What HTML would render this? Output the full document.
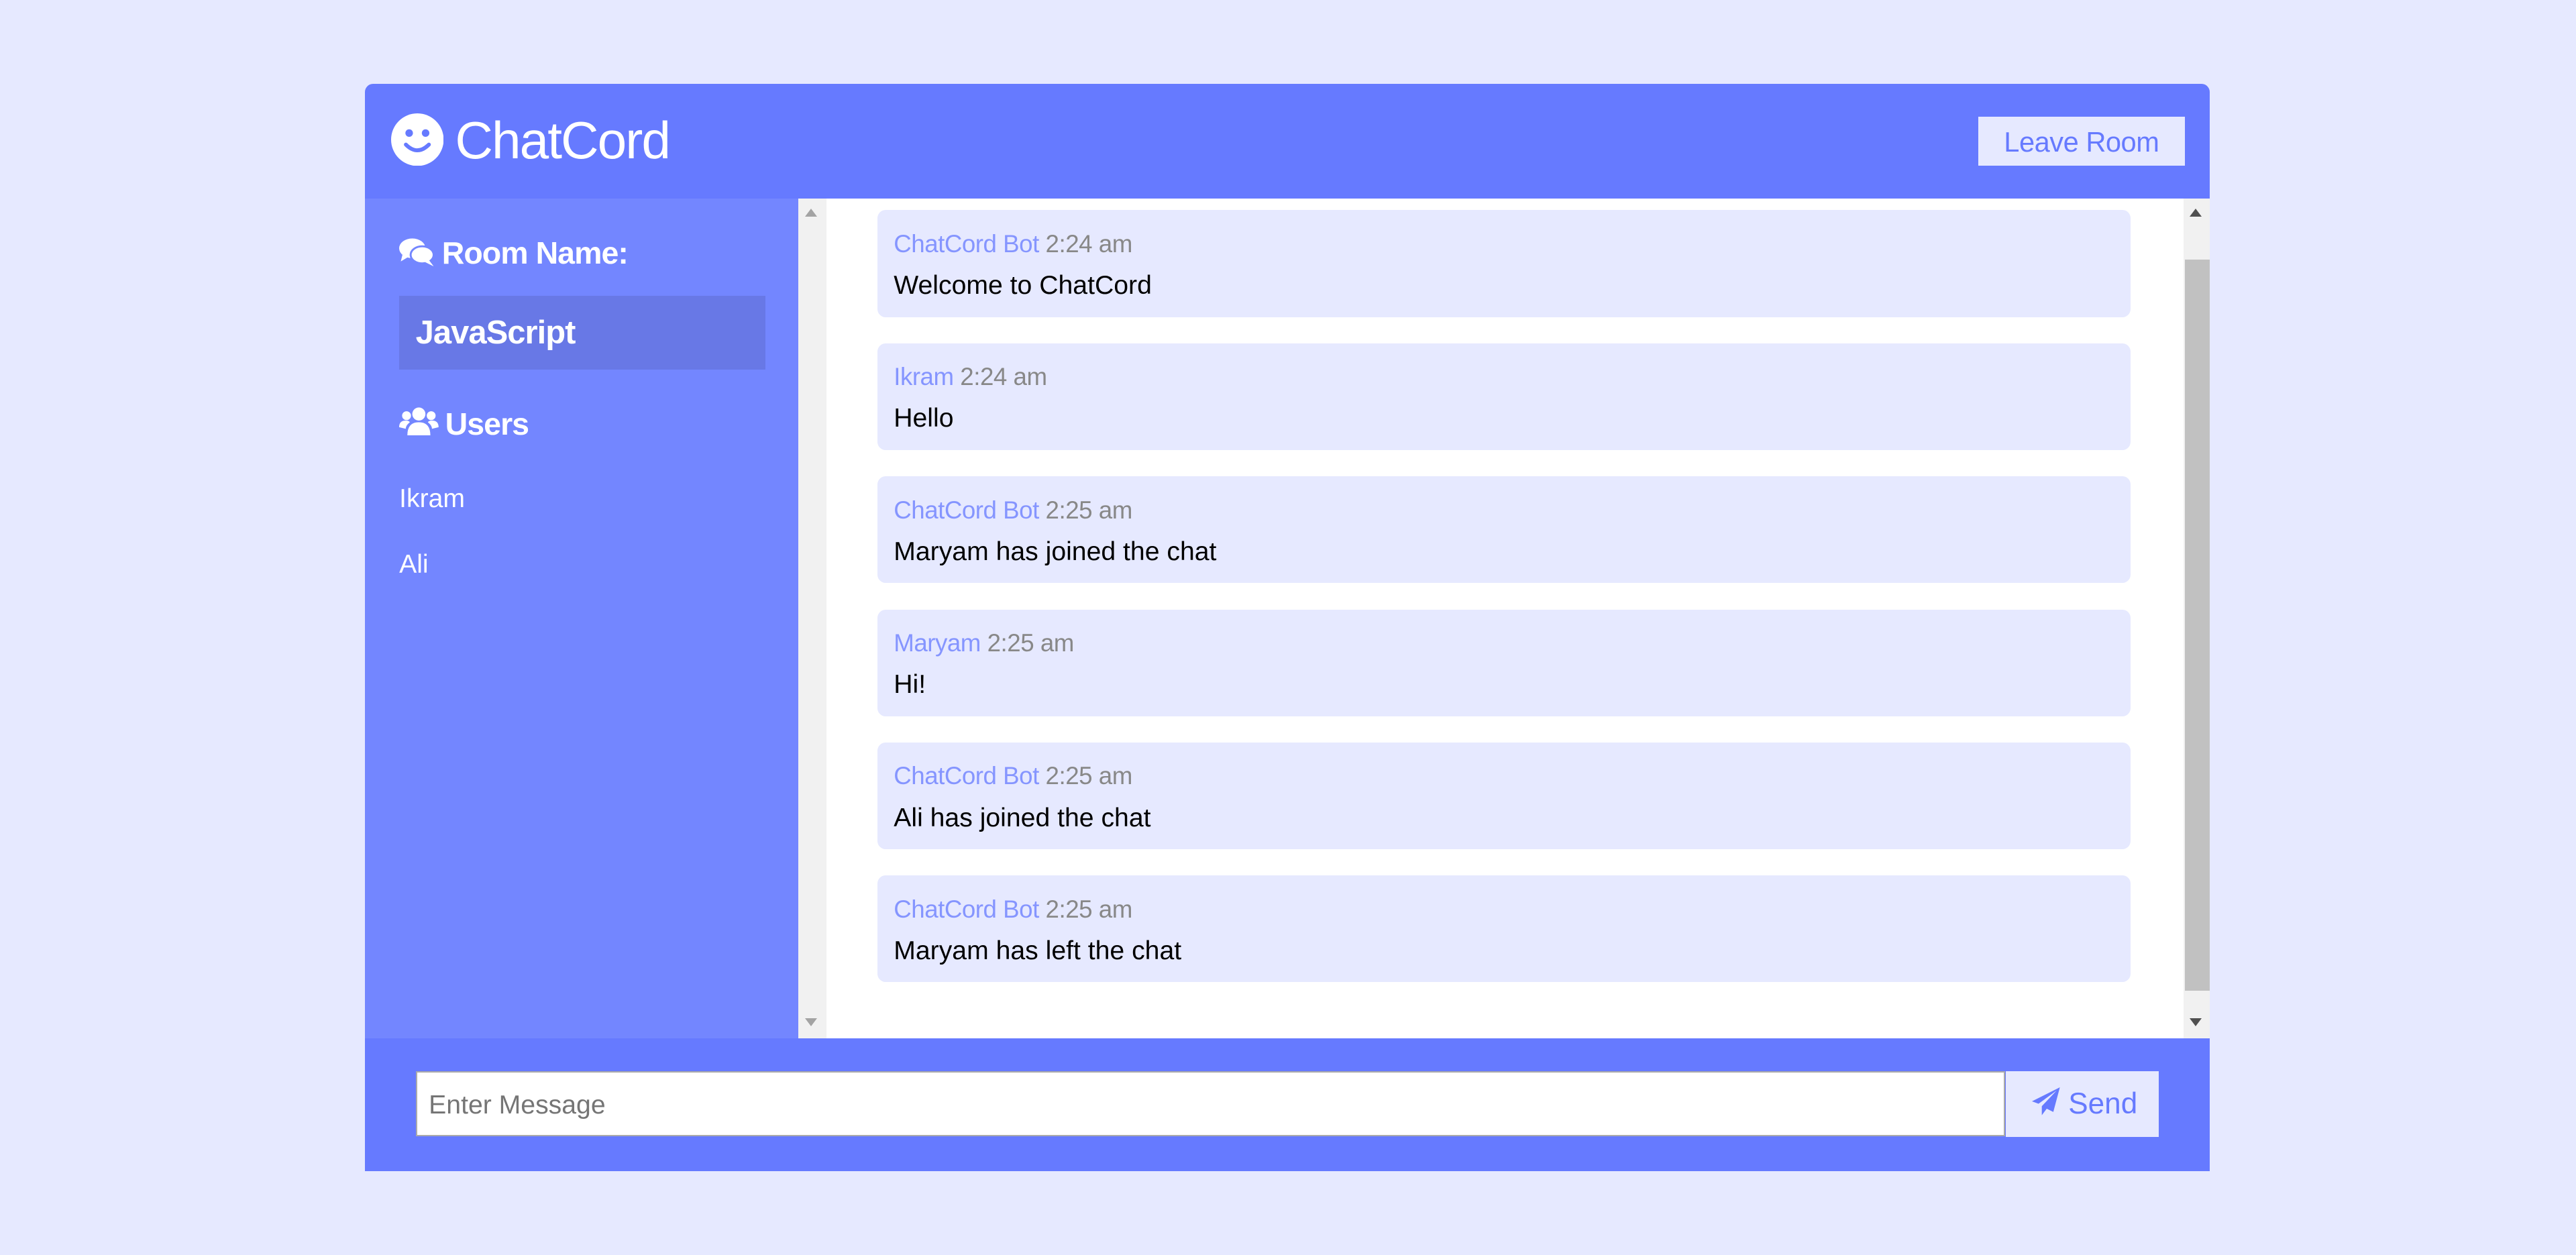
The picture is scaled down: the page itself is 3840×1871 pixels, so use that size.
<!DOCTYPE html>
<html><head><meta charset="utf-8"><style>
html,body{margin:0;padding:0}
body{width:3840px;height:1870px;background:#e6e9ff;overflow:hidden;font-family:"Liberation Sans",sans-serif}
#z{zoom:2.44898;position:relative;width:1568px;height:764px}
.a{position:absolute}
.msg{position:absolute;left:534px;width:763px;height:65px;background:#e6e9ff;border-radius:5px}
.meta{position:absolute;left:10px;top:12px;font-size:15px;color:#8595ff;letter-spacing:-0.2px}
.meta span{color:#888}
.txt{position:absolute;left:10px;top:37px;font-size:16px;color:#000}
</style></head><body><div id="z">
<div class="a" style="left:222px;top:51px;width:1123px;height:70px;background:#667aff;border-radius:5px 5px 0 0"></div>
<svg class="a" style="left:238px;top:69px" width="32" height="32" viewBox="0 0 32 32"><circle cx="16" cy="16" r="16" fill="#fff"/><circle cx="11" cy="12" r="2.3" fill="#667aff"/><circle cx="21" cy="12" r="2.3" fill="#667aff"/><path d="M9 19 Q16 26 23 19" stroke="#667aff" stroke-width="2.4" fill="none" stroke-linecap="round"/></svg>
<div class="a" style="left:277px;top:67px;font-size:32px;color:#fff;letter-spacing:-0.8px">ChatCord</div>
<div class="a" style="left:1204px;top:71px;width:126px;height:30px;background:#e6e9ff;color:#667aff;font-size:17px;text-align:center;line-height:31px;letter-spacing:-0.2px">Leave Room</div>
<div class="a" style="left:222px;top:121px;width:264px;height:511px;background:#7386ff"></div>
<svg class="a" style="left:243px;top:144px" width="22" height="18" viewBox="0 0 22 18"><ellipse cx="8" cy="7" rx="8" ry="6" fill="#fff"/><path d="M2 11 L1 15 L6 12Z" fill="#fff"/><ellipse cx="14" cy="11" rx="7" ry="5.2" fill="#fff" stroke="#7386ff" stroke-width="1.2"/><path d="M18 14 L21 18 L15 15Z" fill="#fff"/></svg>
<div class="a" style="left:269px;top:143px;font-size:19px;color:#fff;font-weight:bold;letter-spacing:-0.4px">Room Name:</div>
<div class="a" style="left:243px;top:180px;width:223px;height:45px;background:#6878e6"></div>
<div class="a" style="left:253px;top:191px;font-size:20px;color:#fff;font-weight:bold;letter-spacing:-0.4px">JavaScript</div>
<svg class="a" style="left:243px;top:247px" width="24" height="18" viewBox="0 0 24 18"><circle cx="12" cy="5" r="4" fill="#fff"/><path d="M5 18 Q5 10 12 10 Q19 10 19 18Z" fill="#fff"/><circle cx="4.5" cy="6" r="2.7" fill="#fff"/><circle cx="19.5" cy="6" r="2.7" fill="#fff"/><path d="M0 13 Q0 9 4 9 Q6 9 6.5 10 Q4 12 4 14Z" fill="#fff"/><path d="M24 13 Q24 9 20 9 Q18 9 17.5 10 Q20 12 20 14Z" fill="#fff"/></svg>
<div class="a" style="left:271px;top:247px;font-size:19px;color:#fff;font-weight:bold;letter-spacing:-0.4px">Users</div>
<div class="a" style="left:243px;top:295px;font-size:16px;color:#fff">Ikram</div>
<div class="a" style="left:243px;top:335px;font-size:16px;color:#fff">Ali</div>
<div class="a" style="left:486px;top:121px;width:859px;height:511px;background:#fff"></div>
<div class="a" style="left:486px;top:121px;width:17px;height:511px;background:#f1f1f1"></div>
<div class="a" style="left:490px;top:127px;border:4px solid transparent;border-bottom:5px solid #a3a3a3;border-top:0"></div>
<div class="a" style="left:490px;top:620px;border:4px solid transparent;border-top:5px solid #a3a3a3;border-bottom:0"></div>
<div class="a" style="left:1329px;top:121px;width:16px;height:511px;background:#f1f1f1"></div>
<div class="a" style="left:1330px;top:158px;width:15px;height:445px;background:#c1c1c1"></div>
<div class="a" style="left:1333px;top:127px;border:4px solid transparent;border-bottom:5px solid #505050;border-top:0"></div>
<div class="a" style="left:1333px;top:620px;border:4px solid transparent;border-top:5px solid #505050;border-bottom:0"></div>
<div class="msg" style="top:128px"><div class="meta">ChatCord Bot <span>2:24 am</span></div><div class="txt">Welcome to ChatCord</div></div>
<div class="msg" style="top:209px"><div class="meta">Ikram <span>2:24 am</span></div><div class="txt">Hello</div></div>
<div class="msg" style="top:290px"><div class="meta">ChatCord Bot <span>2:25 am</span></div><div class="txt">Maryam has joined the chat</div></div>
<div class="msg" style="top:371px"><div class="meta">Maryam <span>2:25 am</span></div><div class="txt">Hi!</div></div>
<div class="msg" style="top:452px"><div class="meta">ChatCord Bot <span>2:25 am</span></div><div class="txt">Ali has joined the chat</div></div>
<div class="msg" style="top:533px"><div class="meta">ChatCord Bot <span>2:25 am</span></div><div class="txt">Maryam has left the chat</div></div>
<div class="a" style="left:222px;top:632px;width:1123px;height:81px;background:#667aff"></div>
<div class="a" style="left:253px;top:652px;width:966px;height:38px;background:#fff;border:1px solid #aaa"></div>
<div class="a" style="left:261px;top:664px;font-size:16px;color:#757575">Enter Message</div>
<div class="a" style="left:1221px;top:652px;width:93px;height:40px;background:#e6e9ff"></div>
<svg class="a" style="left:1237px;top:662px" width="18" height="18" viewBox="0 0 18 18"><path d="M17 0 L0 8.5 L4 10 L15 2 L6 11.5 L6 17 L9 13 L13 15Z" fill="#667aff"/></svg>
<div class="a" style="left:1259px;top:662px;font-size:18px;color:#667aff">Send</div>
</div></body></html>
